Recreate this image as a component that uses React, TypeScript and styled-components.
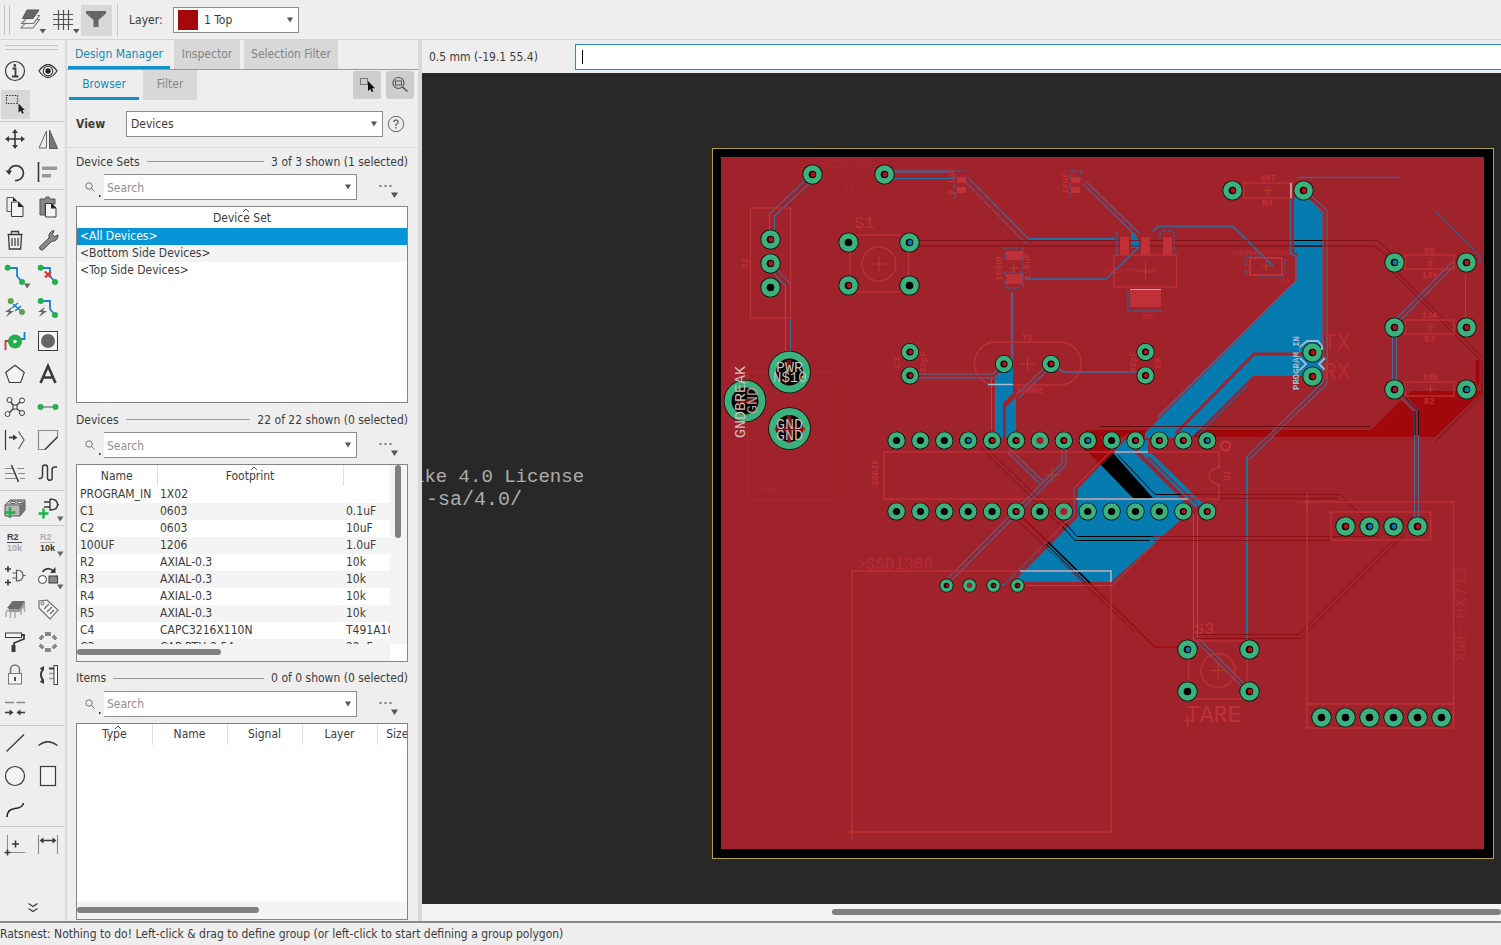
import React from 'react';
import styled, { createGlobalStyle, css } from 'styled-components';

const ink = '#3c3c3c';
const blue = '#0696d7';
const chrome = '#eeeeee';

const GlobalStyle = createGlobalStyle`
  *, *::before, *::after { box-sizing: border-box; }
  html, body, #root { height: 100%; }
  body {
    margin: 0;
    background: ${chrome};
    color: ${ink};
    font: 12px/16px "DejaVu Sans Condensed", "DejaVu Sans", sans-serif;
    overflow: hidden;
  }
  button, input, select { font: inherit; color: inherit; margin: 0; border-radius: 0; }
`;

/* ---------- shell ---------- */

const Shell = styled.div`
  display: flex;
  flex-direction: column;
  height: 100vh;
`;
const TopBar = styled.header`
  display: flex;
  align-items: center;
  height: 40px;
  flex: none;
  padding-top: 1px;
  padding-left: 4px;
  border-bottom: 1px solid #d4d4d4;
`;
const Grip = styled.div`
  width: 6px;
  height: 30px;
  margin-right: 7px;
  border: solid #c4c4c4;
  border-width: 0 1px;
`;
const BarButton = styled.button<{ $on?: boolean }>`
  width: 31px;
  height: 31px;
  margin-right: 1px;
  padding: 0;
  border: 0;
  background: ${p => (p.$on ? '#d8d8d8' : 'transparent')};
  svg { display: block; }
`;
const Rule = styled.div`
  width: 1px;
  height: 34px;
  margin: 0 11px 0 4px;
  background: #cccccc;
`;
const LayerLabel = styled.label`
  width: 44px;
`;
const Workspace = styled.div`
  display: flex;
  flex: 1;
  min-height: 0;
`;
const StatusBar = styled.footer`
  flex: none;
  height: 24px;
  border-top: 2px solid #8a8a8a;
  line-height: 23px;
  white-space: nowrap;
`;

/* ---------- form parts ---------- */

const Field = styled.div<{ $grow?: boolean; $w?: number; $open?: boolean }>`
  display: flex;
  align-items: center;
  height: 26px;
  ${p => (p.$grow ? 'flex: 1;' : `width: ${p.$w}px;`)}
  min-width: 0;
  padding-right: 4px;
  background: #fff;
  border: 1px solid #8c8c8c;
  ${p => p.$open && 'border-left: 0;'}
`;
const Swatch = styled.span`
  flex: none;
  width: 20px;
  height: 20px;
  margin-left: 4px;
  background: #a3080b;
`;
const control = css`
  flex: 1;
  min-width: 0;
  height: 24px;
  border: 0;
  background: transparent;
  appearance: none;
  outline: none;
`;
const Select = styled.select<{ $pad: number }>`
  ${control}
  padding: 0 0 0 ${p => p.$pad}px;
`;
const Input = styled.input`
  ${control}
  padding: 1px 3px 0;
  &::placeholder { color: #8f8f8f; opacity: 1; }
`;
const Arrow = () => (
  <svg width="8" height="6" viewBox="0 0 8 6"><path d="M1 .5h6L4 5.5z" fill="#555" /></svg>
);

/* ---------- tool palette ---------- */

const Palette = styled.nav`
  display: flex;
  flex-direction: column;
  flex: none;
  width: 67px;
  border-right: 2px solid #dadada;
`;
const PaletteGrip = styled.div`
  height: 5px;
  margin: 5px 7px 4px 5px;
  border: solid #c4c4c4;
  border-width: 1px 0;
`;
const ToolGroup = styled.div<{ $last?: boolean }>`
  display: grid;
  grid-template-columns: 33px 32px;
  grid-auto-rows: 33px;
  padding-top: 1px;
  border-bottom: ${p => (p.$last ? 0 : 1)}px solid #cbcbcb;
`;
const Tool = styled.button`
  padding: 0;
  border: 0;
  background: transparent;
  svg { display: block; overflow: visible; }
`;
const More = styled.button`
  align-self: center;
  margin-top: auto;
  margin-bottom: 7px;
  padding: 0;
  border: 0;
  background: none;
  svg { display: block; }
`;

const g = '#22b14c';
const b = '#1b7fd6';
const k = '#3a3a3a';
const m = '#8a8a8a';
const Drop = () => <path d="M24 24.500h6.500L27.200 29.500z" fill="#666" />;
const L = ({ d, c = k, w = 1.3, f = 'none' }: { d: string; c?: string; w?: number; f?: string }) => (
  <path d={d} stroke={c} strokeWidth={w} fill={f} />
);
const Dot = ({ x, y, r = 3, c = g }: { x: number; y: number; r?: number; c?: string }) => (
  <circle cx={x} cy={y} r={r} fill={c} />
);
const ValueGlyph = ({ top, bottom }: { top: string; bottom: string }) => (
  <g fontFamily="Liberation Sans" fontWeight="bold" fontSize="9">
    <text x="7" y="13" fill={top}>R2</text>
    <text x="7" y="24" fill={bottom}>10k</text>
    <L d="M7 15.500h15" c={top} w={1} />
  </g>
);

const groups: [string, React.ReactNode][][] = [
  [
    ['Info', <><circle cx="15" cy="16" r="9.500" fill="none" stroke={k} strokeWidth="1.200" /><L d="M12.500 13.500h3v8M12 21.500h6.500" w={1.800} /><Dot x={14.800} y={10.500} r={1.400} c={k} /></>],
    ['Show', <><L d="M6 16q9-13 18 0q-9 13-18 0z" /><circle cx="15" cy="16" r="4.800" fill="none" stroke={k} strokeWidth="1.100" /><Dot x={15} y={16} r={2.700} c="#222" /></>],
    ['Group', <><rect x="1" y="2" width="29" height="29" rx="1" fill="#d8d8d8" /><rect x="6.500" y="7.500" width="11" height="8" fill="none" stroke={k} strokeWidth="1.200" strokeDasharray="1.500 1.200" /><path d="M18.500 15.500v9l2.200-1.800 1.500 3 1.600-.8-1.500-3h2.500z" fill="#222" /></>],
  ],
  [
    ['Move', <><L d="M15 8v16M7 16h16" w={1.600} /><path d="M15 6l3 4h-6zM15 26l3-4h-6zM5 16l4-3v6zM25 16l-4-3v6z" fill={k} /></>],
    ['Mirror', <><L d="M13.500 8v17h-7.500z" w={1} c="#666" /><path d="M16.500 7v18.500h8z" fill="#777" stroke="#555" /></>],
    ['Rotate', <><L d="M8.500 17a7.500 7.500 0 1 1 6.500 7.500" w={1.700} /><path d="M5.500 14.500h6.500l-2.700 4.500z" fill={k} /></>],
    ['Align', <><L d="M5.500 6v20" w={1.600} /><rect x="9" y="10.500" width="15" height="3.500" fill="#999" /><rect x="9" y="18" width="9" height="3.500" fill="#999" /></>],
  ],
  [
    ['Copy', <><L d="M7 6.500h6l3 3M7 6.500v14h4" w={1} c="#555" /><L d="M11.500 11h7l4.500 4.500v10h-11.500z" w={1} f="#f4f4f4" /><path d="M18 10.500v5.500h5.500zM13 6v4h4z" fill="#222" /></>],
    ['Paste', <><path d="M7 8h5l1-2h3l1 2h5v5h-10v11H7z" fill="#888" stroke="#555" /><L d="M12.500 12.500h6l4.500 4.500v9h-10.500z" w={1} f="#f4f4f4" /><path d="M18 12v5.500h5.500z" fill="#222" /></>],
    ['Delete', <><L d="M7.500 10.500h15M11.500 10V7.500h7V10" /><L d="M8.500 11l.8 14h11.400l.8-14" /><L d="M12 14v8M15 14v8M18 14v8" w={1.600} c="#666" /></>],
    ['Change', <><path d="M6.500 23L16 14q-1-6 5-7.500l-1.500 4 2 2 3.500-1.500q0 6-6.500 6.500L9.500 26q-3 .5-3-3z" fill="#8a8a8a" stroke="#444" strokeWidth="1" /></>],
  ],
  [
    ['Route', <><L d="M8 9h9v8l5 6" c={b} w={1.800} /><Dot x={7.700} y={8.700} /><Dot x={22} y={23} /><Drop /></>],
    ['Ripup', <><L d="M8 9h9v8l5 6" c={b} w={1.800} /><Dot x={7.700} y={8.700} /><Dot x={22} y={23} /><L d="M12 12.500l6 6M18 12.500l-6 6" c="#e8312f" w={2.200} /></>],
    ['Unroute', <><path d="M12 15l-7 5h4l-3 5 8-6h-4z" fill="#666" /><L d="M13 12l7 6M12 16l6-5M15 19l6-5" c={b} w={1.600} /><Dot x={10.700} y={9} c="#5fa04e" /><Dot x={22} y={20} c="#5fa04e" /></>],
    ['Quick route', <><path d="M12 15l-7 5h4l-3 5 8-6h-4z" fill="#666" /><L d="M8 9h9v8l5 6" c={b} w={1.800} /><Dot x={7.700} y={9} /><Dot x={22} y={23} /></>],
    ['Via', <><L d="M24.500 7v7h-4" c={b} w={1.800} /><L d="M5.500 25v-9h4" c="#c33" w={1.800} /><Dot x={15} y={16.500} r={7} /><Dot x={15} y={16.500} r={1.800} c="#fff" /></>],
    ['Hole', <><rect x="5.500" y="6.500" width="19" height="19" fill="#f4f4f4" stroke={k} /><Dot x={15} y={16} r={7} c="#666" /></>],
    ['Polygon', <L d="M15 7.200l9.300 7.300-3.700 10H9.400L5.700 14.500z" w={1.100} f="#f4f4f4" />],
    ['Text', <L d="M7.500 25L15 8l7.500 17M10.500 19.500h9" w={2.600} />],
    ['Fanout', <><L d="M13 14l-3-4M17 14l4-4M13 18l-4 4M17 18l4 3" /><rect x="13" y="14" width="4" height="4" fill="none" stroke={k} /><g fill="#f4f4f4" stroke={k}><circle cx="9.500" cy="9" r="2.500" /><circle cx="22" cy="9.500" r="2.500" /><circle cx="7.500" cy="23" r="2.500" /><circle cx="22" cy="22" r="2.500" /></g></>],
    ['Signal', <><L d="M8 16h14" c={m} w={1.600} /><Dot x={7.500} y={16} /><Dot x={22.500} y={16} /></>],
    ['Split', <><L d="M5.500 6v20" w={1.200} /><L d="M9 13.500h5" w={1.800} /><path d="M13 10.500l4.500 3-4.500 3z" fill={k} /><L d="M18.500 7.500l5.500 8.500-5.500 9" w={1.300} c="#666" /></>],
    ['Miter', <><L d="M24.500 13V6.500h-19v19H12" c={m} w={1.200} /><L d="M12 25.500l12.500-12.500" w={1.600} /></>],
    ['Slice', <><L d="M5 11.500h7M17 11.500h7M5 16.500h9M18 16.500h7M5 21.500h11M20 21.500h5" c={m} w={1.100} /><L d="M11.500 8l7 17" w={1.500} /></>],
    ['Meander', <L d="M5.500 21.500H7q2.500 0 2.500-3v-4a2 2 0 0 1 0 0v-4a2.500 2.500 0 0 1 5 0v10.500a2.300 2.300 0 0 0 4.600 0v-8q0-3 2.500-3h2.500" w={1.500} />],
  ],
  [
    ['Add part', <><path d="M5 13l5-5h15v10l-5 6H5z" fill="#b8b8b8" stroke="#555" /><path d="M20 13l5-5v10l-5 6z" fill="#777" /><L d="M5 13h15v11" w={.8} c="#555" /><ellipse cx="13" cy="10.500" rx="2.500" ry="1.200" fill="#eee" stroke="#555" /><ellipse cx="19.500" cy="10.500" rx="2.500" ry="1.200" fill="#eee" stroke="#555" /><L d="M10 15v11M4.500 20.500h11" c={g} w={2.600} /></>],
    ['Add gate', <><L d="M11 10h6M11 15h6M17 7v11q7.500 0 7.500-5.500T17 7M24 12.500h2" w={1.400} /><L d="M10.500 16.500v10M5.500 21.500h10" c={g} w={2.600} /><Drop /></>],
  ],
  [
    ['Name', <ValueGlyph top="#444" bottom="#aaa" />],
    ['Value', <><ValueGlyph top="#b0b0b0" bottom="#333" /><Drop /></>],
    ['Gate swap', <><L d="M8 6v6M5 9h6M8 19.500v6M5 22.500h6" w={1.600} /><L d="M12.500 13h4M12.500 18h4M16.500 10v11q6.500 0 6.500-5.500T16.500 10M23 15.500h2.500" w={1.200} c="#555" /></>],
    ['Replace', <><circle cx="9.500" cy="19.500" r="4" fill="#fff" stroke={k} /><rect x="16" y="16" width="8.500" height="7" fill="#8a8a8a" stroke={k} /><L d="M9.500 12q5-6 11-1" w={1.700} /><path d="M22.500 7v6h-5.500z" fill={k} /><Drop /></>],
    ['Package', <><path d="M7 15l5.500-7H25l-5 8H9z" fill="#6c6c6c" /><path d="M9 16h11l5-8v5l-5 6H8z" fill="#9a9a9a" /><L d="M8 17l-2 2v5M12.500 18l-2 2v5M17 18l-2 2v5M21 17v5M24.500 13v6" c="#aaa" w={1.500} /></>],
    ['Attribute', <><L d="M6 8l8-1 11 10-8 9L6 15z" c="#666" w={1.100} f="#f4f4f4" /><circle cx="9.500" cy="10.500" r="1.500" fill="none" stroke="#666" /><L d="M11 16l5-5M14 19l5-5M17 21l4-4" c="#666" w={1.100} /></>],
    ['Paint', <><rect x="5.500" y="7" width="16" height="4.500" fill="#f4f4f4" stroke={k} /><L d="M22 9h2v4l-10 4v3" w={1.800} /><path d="M11.500 19h4v7h-4z" fill={k} /></>],
    ['Array', <g fill="#888" stroke="#666" strokeWidth=".6"><rect x="12.500" y="6.500" width="5" height="3" /><rect x="12.500" y="22.500" width="5" height="3" /><path d="M6 12l3-3 2 2-3 3zM24 12l-3-3-2 2 3 3zM6 20l3 3 2-2-3-3zM24 20l-3 3-2-2 3-3z" /></g>],
    ['Lock', <><L d="M10.500 15v-4.500a4.500 4.500 0 0 1 9 0V15" c="#777" w={1.600} /><rect x="8.500" y="14.500" width="13" height="10.500" fill="#f4f4f4" stroke="#777" /><L d="M15 18v4" w={1.800} /></>],
    ['Pin swap', <><L d="M10 10q-4 5.500 0 11.500" w={2} /><path d="M6.500 9.500L11 7v5zM6.500 22.500L11 25v-5z" fill={k} /><L d="M16 9.500h5" w={2} /><L d="M16 14.500h5M16 19.500h5" w={1.600} c="#999" /><rect x="21" y="6.500" width="3.500" height="19" fill="#fff" stroke={k} /></>],
    ['Optimize', <><L d="M5 10.500h9M16.500 10.500H25" c={m} w={1.600} /><L d="M5 20.500h5M20 20.500h5" w={1.700} /><path d="M9.500 17.500l4 3-4 3zM20.500 17.500l-4 3 4 3z" fill={k} /></>],
  ],
  [
    ['Line', <L d="M6.500 24.500L24 7.500" />],
    ['Arc', <L d="M5.500 18.500q9-7.500 19 0" />],
    ['Circle', <circle cx="15" cy="16" r="9.500" fill="#f4f4f4" stroke={k} strokeWidth="1.200" />],
    ['Rectangle', <rect x="7.500" y="6.500" width="15" height="19" fill="#f4f4f4" stroke={k} strokeWidth="1.200" />],
    ['Spline', <L d="M7 24q0-7.500 8-8.500T23.500 10" w={1.600} c="#222" />],
  ],
  [
    ['Mark', <><L d="M7.500 7v16M7.500 24.500H25" c={m} w={1} /><L d="M15.500 12.500v7M12 16h7" w={1.600} /><L d="M7.500 21.500v6M4.500 24.500h6" w={1.600} /></>],
    ['Dimension', <><L d="M5.500 7v19M24.500 7v19" c={m} w={1.100} /><L d="M8 12.500h14" w={1.500} /><path d="M6.500 12.500l4-3v6zM23.500 12.500l-4-3v6z" fill={k} /></>],
  ],
];

/* ---------- design manager ---------- */

const Dock = styled.aside`
  display: flex;
  flex-direction: column;
  flex: none;
  width: 355px;
  border-right: 4px solid #d8d8d8;
`;
const Tabs = styled.div`
  display: flex;
  gap: 4px;
  height: 30px;
  padding-left: 1px;
  border-bottom: 1px solid #9a9a9a;
`;
const SubTabs = styled.div`
  display: flex;
  gap: 4px;
  height: 30px;
  padding: 0 4px 0 2px;
`;
const Tab = styled.button<{ $on?: boolean; $w: number }>`
  width: ${p => p.$w}px;
  padding: 0 0 2px;
  border: 0;
  white-space: nowrap;
  background: ${p => (p.$on ? 'transparent' : '#d8d8d8')};
  color: ${p => (p.$on ? '#1587bd' : '#858585')};
  box-shadow: ${p => (p.$on ? 'inset 0 -3px #1290cb' : 'none')};
`;
const SquareButton = styled.button`
  width: 28px;
  height: 28px;
  margin: 1px 0 0 1px;
  padding: 0;
  border: 0;
  border-radius: 2px;
  background: #cdcdcd;
  svg { display: block; }
`;
const Push = styled.div`
  flex: 1;
`;
const ViewRow = styled.div`
  display: flex;
  align-items: center;
  height: 48px;
  padding: 0 13px 0 9px;
  border-bottom: 1px solid #dadada;
`;
const ViewLabel = styled.label`
  width: 50px;
  font-weight: bold;
`;
const Help = styled.button`
  margin-left: 4px;
  padding: 0;
  border: 0;
  background: none;
  svg { display: block; }
`;
const Sections = styled.div`
  display: flex;
  flex-direction: column;
  flex: 1;
  gap: 7px;
  min-height: 0;
  padding: 4px 10px 1px 9px;
`;
const Section = styled.section`
  display: flex;
  flex-direction: column;
  flex: 1;
  min-height: 0;
`;
const Caption = styled.div`
  display: flex;
  align-items: center;
  gap: 7px;
  height: 18px;
  margin-bottom: 4px;
  padding-top: 1px;
  white-space: nowrap;
  &::before { content: ""; order: 1; flex: 1; height: 1px; background: #9a9a9a; }
`;
const Count = styled.span`
  order: 2;
`;
const SearchRow = styled.div`
  display: flex;
  align-items: center;
  margin-bottom: 6px;
`;
const SearchIcon = styled.label`
  width: 28px;
  height: 26px;
  svg { display: block; }
`;
const Dots = styled.button`
  width: 51px;
  height: 26px;
  padding: 0;
  border: 0;
  background: none;
  svg { display: block; }
`;
const ListBox = styled.div`
  display: flex;
  flex-direction: column;
  flex: 1;
  min-height: 0;
  overflow: hidden;
  background: #fff;
  border: 1px solid #858585;
`;
const ListMain = styled.div`
  display: flex;
  flex: 1;
  min-height: 0;
`;
const Viewport = styled.div`
  flex: 1;
  min-width: 0;
  overflow: hidden;
`;
const Table = styled.table<{ $w: string }>`
  width: ${p => p.$w};
  table-layout: fixed;
  border-collapse: collapse;
  th {
    position: relative;
    height: 21px;
    padding: 0;
    font-weight: normal;
    border-right: 1px solid #e0e0e0;
  }
  th:last-child { border-right: 0; }
  td {
    height: 17px;
    padding: 0 0 0 3px;
    line-height: 17px;
    white-space: nowrap;
    overflow: hidden;
  }
  tbody tr:nth-child(even) { background: #f4f4f4; }
`;
const SelectedRow = styled.tr`
  background: ${blue};
  color: #fff;
`;
const SortMark = styled.svg`
  position: absolute;
  top: 1px;
  left: 50%;
`;
const Track = styled.div<{ $v?: boolean; $corner?: boolean }>`
  flex: none;
  ${p => (p.$v ? 'width: 17px; padding: 0 6px 0 5px;' : `height: 17px; padding: 5px 0 6px;`)}
  ${p => p.$corner && 'margin-right: 17px;'}
  background: repeating-conic-gradient(#ececec 0% 25%, #fbfbfb 0% 50%) 0 0 / 2px 2px;
`;
const Thumb = styled.div<{ $size: string; $v?: boolean; $end?: boolean }>`
  ${p => (p.$v ? `height: ${p.$size}; width: 6px;` : `width: ${p.$size}; height: 6px;`)}
  ${p => p.$end && 'margin-left: auto;'}
  border-radius: 3px;
  background: #808080;
`;

function Search({ id, label }: { id: string; label: string }) {
  return (
    <SearchRow>
      <SearchIcon htmlFor={id} aria-label={label}>
        <svg width="28" height="26"><circle cx="13" cy="12" r="3.200" fill="none" stroke="#777" /><path d="M15.500 14.500l3 3" stroke="#777" /><rect x="23" y="21" width="1.500" height="2" fill="#333" /></svg>
      </SearchIcon>
      <Field $grow $open>
        <Input id={id} placeholder="Search" />
        <Arrow />
      </Field>
      <Dots aria-label={`${label} options`}>
        <svg width="51" height="26"><path d="M22.500 12h2m3 0h2m3 0h2" stroke="#555" strokeWidth="1.600" /><path d="M34 18.500h7L37.500 24z" fill="#555" /></svg>
      </Dots>
    </SearchRow>
  );
}
const Sort = () => (
  <SortMark width="8" height="5" viewBox="0 0 8 5"><path d="M1 4l3-3 3 3" fill="none" stroke="#555" /></SortMark>
);

const devices = [
  ['PROGRAM_IN', '1X02', ''],
  ['C1', '0603', '0.1uF'],
  ['C2', '0603', '10uF'],
  ['100UF', '1206', '1.0uF'],
  ['R2', 'AXIAL-0.3', '10k'],
  ['R3', 'AXIAL-0.3', '10k'],
  ['R4', 'AXIAL-0.3', '10k'],
  ['R5', 'AXIAL-0.3', '10k'],
  ['C4', 'CAPC3216X110N', 'T491A106M004AT'],
  ['C3', 'CAP-PTH-2.54', '22pF'],
];

/* ---------- board view ---------- */

const Editor = styled.main`
  display: flex;
  flex-direction: column;
  flex: 1;
  min-width: 0;
`;
const CommandRow = styled.div`
  display: flex;
  align-items: center;
  flex: none;
  height: 33px;
  padding-left: 7px;
`;
const Coordinates = styled.span`
  width: 146px;
`;
const CommandField = styled.div`
  display: flex;
  align-items: center;
  flex: 1;
  height: 26px;
  padding-left: 6px;
  background: #fff;
  border: 1px solid #2b8fba;
  border-right: 0;
  box-shadow: 0 0 0 1px #d6f1f9;
`;
const Caret = styled.span`
  width: 1px;
  height: 14px;
  background: #000;
`;
const BoardArea = styled.div`
  flex: 1;
  min-height: 0;
  background: #282828;
  svg { display: block; width: 100%; height: 100%; }
`;

const copper = '#a0222b';
const silk = '#bf3037';
const faint = '#ab2831';
const pour = '#057bb0';
const top = '#a1080c';
const pale = '#9fbdd0';

/* A routed wire: two isolation outlines with copper between them. */
const Wire = ({ p, c = '#41709f', w = 6 }: { p: string; c?: string; w?: number }) => (
  <>
    <polyline points={p} fill="none" stroke={c} strokeWidth={w} />
    <polyline points={p} fill="none" stroke={copper} strokeWidth={w - 2} />
  </>
);
const Seg = ({ p, c = '#2170a6', w = 1, dash }: { p: string; c?: string; w?: number; dash?: string }) => (
  <polyline points={p} fill="none" stroke={c} strokeWidth={w} strokeDasharray={dash} />
);
const Box = ({ x, y, x2, y2, c = silk, w = 1.4, rx = 0 }: { x: number; y: number; x2: number; y2: number; c?: string; w?: number; rx?: number }) => (
  <rect x={x} y={y} width={x2 - x} height={y2 - y} rx={rx} fill="none" stroke={c} strokeWidth={w} />
);
const Cross = ({ x, y, s = 8 }: { x: number; y: number; s?: number }) => (
  <path d={`M${x - s} ${y}h${2 * s}M${x} ${y - s}v${2 * s}`} stroke="#b5452c" strokeWidth=".8" />
);
const T = ({ x, y, s, c = silk, a = 0, bold, children }: { x: number; y: number; s: number; c?: string; a?: number; bold?: boolean; children: string }) => (
  <text transform={`translate(${x} ${y}) rotate(${a})`} fontSize={s} fill={c} fontWeight={bold ? 'bold' : 'normal'}>{children}</text>
);

type Pad = [number, number, string?];
const red = '#b0141b';
const stdPads: Pad[] = [
  [812.5, 174.5, red], [884.5, 174.5, red], [770.5, 239.500, red], [770.5, 263.500, red], [770.5, 287.500],
  [848.5, 242.500], [909.5, 242.500, pour], [848.5, 285.500, red], [909.5, 285.500],
  [1232.500, 190.500, red], [1303.5, 190.500, red],
  [1394.5, 262.500, pour], [1466.5, 262.500, red], [1394.5, 327.500, red], [1466.5, 327.500, red], [1394.5, 389.500, red], [1466.5, 389.500, pour],
  [1312.5, 352.500, red], [1312.5, 376.500, red],
  [1345.500, 526.500, red], [1369.500, 526.500, pour], [1393.500, 526.500, pour], [1417.500, 526.500, red],
  [1187.500, 649.500, pour], [1249.500, 649.500, red], [1187.500, 691.500], [1249.500, 691.500, red],
  ...[0, 1, 2, 3, 4, 5].map(i => [1321.500 + 24 * i, 717.500] as Pad),
];
const topHoles: (string | undefined)[] = [undefined, undefined, undefined, pour, red, red, copper, red, pour, undefined, red, red, red, pour];
const bottomHoles: (string | undefined)[] = [undefined, undefined, undefined, undefined, undefined, red, undefined, copper, undefined, undefined, undefined, undefined, red, red];
const dipPads: Pad[] = [
  [910, 352, red], [910, 375.500, red], [1004, 364, red], [1051, 364, red], [1145.500, 352, red], [1145.500, 375.500, red],
  ...topHoles.map((h, i) => [896.500 + 23.900 * i, 440.500, h] as Pad),
  ...bottomHoles.map((h, i) => [896.500 + 23.900 * i, 511.500, h] as Pad),
];
const displayPads: Pad[] = [[946.500, 585.500, red], [969.500, 585.500, copper], [993.500, 585.500, red], [1017.500, 585.500, red]];
const bigPads: Pad[] = [[789.500, 372], [745, 401], [789.500, 428.500]];

const Pads = ({ list, r, hole }: { list: Pad[]; r: number; hole: number }) => (
  <>
    {list.map(([x, y, c], i) => (
      <g key={i}>
        <circle cx={x} cy={y} r={r + 0.800} fill="#06110c" />
        <circle cx={x} cy={y} r={r} fill="#3bb27d" />
        <circle cx={x} cy={y} r={hole} fill={c === copper ? copper : '#000'} />
        {c && <circle cx={x + 0.500} cy={y} r={hole - 1.300} fill={c} />}
      </g>
    ))}
  </>
);

const Board = () => (
  <svg role="img" aria-label="Board layout">
    <g transform="translate(-422 -73)" fontFamily="Liberation Mono">
      <T x={413} y={482} s={19} c="#adadad">ike 4.0 License</T>
      <T x={426} y={505} s={20} c="#adadad">-sa/4.0/</T>
      <rect x="712.500" y="148.500" width="781" height="710" fill="#000" stroke="#b3a04e" />
      <rect x="721" y="157" width="763" height="692" fill={copper} />

      {/* top layer pour */}
      <path d="M1085 430H1371L1411 391H1483L1435 437H1085z" fill={top} />
      <Seg p="1477.500,360 1477.500,385" c={top} w={4} />

      {/* bottom layer pours */}
      <path d="M1294 197h12l16 16v163h-69l-62 62h-46v-5l152-152v-28h-3z" fill={pour} />
      <path d="M1125 440h23v18l50 48-13 10-74 66h-90l-4-4 61-61v-28z" fill={pour} />
      <path d="M996 376l9-9h8v26l-10 11v34h-7zM1016 397l-10 10v31h10z" fill={pour} />
      <path d="M1084 449l14-14 16 17-13 13z" fill={top} />
      <path d="M1101 465l12-12 40 45h-20z" fill="#000" />
      <path d="M1131 231l8 9v8h-8z" fill={pour} />

      {/* bottom layer wires */}
      <Wire p="808,181 772,215 772,232" />
      <Wire p="775,271 788,285 788,352" />
      <Seg p="893,171.500 954,171.500" c="#5b5a84" w={2.500} />
      <Seg p="893,178.500 954,178.500" />
      <Wire p="966,179 1028,242" />
      <Seg p="1028,239 1115,239" w={2} />
      <Seg p="1012,292 1012,366" c="#5b5a84" w={2.500} />
      <Seg p="1025,279 1106,279 1140,246" w={1.600} />
      <Wire p="1085,183 1138,235" w={5} />
      <Wire p="918,376 993.500,376 1002,368" w={5} />
      <Wire p="993.500,379 993.500,433" w={5} />
      <Seg p="1056,368 1064,372 1137,372" c="#5b5a84" w={2} />
      <Wire p="1046,369 1018,396" w={5} />
      <Wire p="1008,450 1041,482" w={5} />
      <Wire p="1064,448 1064,464 950,579" w={5} />
      <Seg p="1004.500,438 1004.500,404 1016,393" c={copper} w={3} />
      <Seg p="1153,231 1158,226.500 1233,226.500 1273,266" c="#3d6391" w={2} />
      <Seg p="1297,177.500 1400,177.500" c="#55588a" w={1.500} />
      <Seg p="1290.500,183 1290.500,253 1296,257 1296,281 1157,418" c="#4a6796" w={1.500} />
      <Wire p="1309,197 1325,211 1325,383 1248,458" w={5} />
      <Seg p="1247,457 1247,643" w={2} />
      <Seg p="1310,354 1254,354 1176,433" c={copper} w={3} />
      <Seg p="1247,386 1198,435" c="#3d6391" />
      <Wire p="1453,264 1397,321" w={5} />
      <Wire p="1394.500,336 1394.500,381" w={5} />
      <Seg p="1465.500,275 1465.500,317" />
      <Seg p="1435,211 1480,256 1480,264" dash="3 1" />
      <Wire p="1403,397 1416.500,411 1416.500,519" w={5} />
      <Seg p="1403,395 1418.500,411 1418.500,435" c="#141018" />
      <Seg p="1415,411 1415,435" c="#141018" />
      <Seg p="1148,453 1207,510" c={pour} w={4} />
      <Seg p="1135,450 1196,511" c={copper} w={4} />
      <Wire p="1195.500,514 1195.500,638 1246,688" w={5} />
      <Seg p="1026,585.500 1112,585.500 1153,545" c="#4a6796" />
      <Seg p="1000,585 1004,585 1066,522 1074,516 1074,488 1128,434" c="#4a6796" />

      {/* top layer wires */}
      <g opacity=".9">
        <Seg p="918,240.500 1378,240.500 1396,258" c="#7d1119" />
        <Seg p="918,246 1375,246 1390,259" c="#7d1119" />
        <Seg p="1392,272 1482,362 1482,395 1435,442" c="#7d1119" />
        <Seg p="1397,272 1482,357" c="#7d1119" />
        <Seg p="1100,426.500 1370,426.500" c="#5f0d13" />
        <Seg p="980,447 1060,525" c="#7d1119" />
        <Seg p="986,447 1066,525" c="#7d1119" />
        <Seg p="1014,517 1135,632" c="#7d1119" />
        <Seg p="1019,514 1155,647 1180,647" c={top} w={1.500} />
        <Seg p="1153,536.500 1378,536.500" c="#8a0d14" />
        <Seg p="1153,540.500 1331,540.500" c="#8a0d14" />
        <Seg p="1181,494.500 1340,494.500 1368,521" c="#8a0d14" />
        <Seg p="1181,498.500 1338,498.500" c="#8a0d14" />
        <Seg p="1198,634.500 1299,634.500 1400,533" c="#8a0d14" />
        <Seg p="1198,638.500 1301,638.500 1404,535" c="#8a0d14" />
      </g>
      <Seg p="1066,524 1077,536.500 1153,536.500" c="#000" />
      <Seg p="1062,526 1075,540.500 1150,540.500" c="#000" />
      <Seg p="1118,455 1155,494.500 1181,494.500" c="#000" />
      <Seg p="1294,240.500 1322,240.500" c="#000" />
      <Seg p="1294,246 1322,246" c="#000" />
      <Seg p="1048,542 1090,583" c="#000" w={1.500} />
      <Seg p="1046,544 1086,583" c="#000" />

      {/* part outlines */}
      <Box x={750.500} y={208} x2={790.500} y2={318} />
      <Box x={747.500} y={372} x2={832} y2={500} c={faint} w={1} />
      <Seg p="747,472 832,472" c={faint} />
      <Box x={823} y={167} x2={867} y2={181} c={faint} w={1} />
      <Box x={850} y={235} x2={908.500} y2={292} />
      <circle cx="879" cy="264" r="17" fill="none" stroke={silk} strokeWidth="1.400" />
      <Box x={974.500} y={342} x2={1081} y2={385} rx={21} />
      <path d="M1219 452H884v47h335v-14q-10-2-10-9t10-9z" fill="none" stroke={silk} strokeWidth="1.500" />
      <circle cx="1225.500" cy="446" r="4.500" fill="none" stroke={silk} strokeWidth="2.500" />
      <Box x={1244} y={183} x2={1291} y2={198} />
      <Box x={1405} y={255} x2={1454} y2={269} />
      <Box x={1405} y={320} x2={1454} y2={334} />
      <Box x={1405} y={382} x2={1454} y2={396} />
      <Box x={852} y={571} x2={1111} y2={832} />
      <Box x={1307} y={502} x2={1453.500} y2={728} />
      <Seg p="1307,704 1453,704" c={silk} w={1.400} />
      <Box x={1331} y={512} x2={1430.500} y2={540} />
      <Box x={1188.500} y={641} x2={1247} y2={699} />
      <circle cx="1218" cy="670.500" r="17" fill="none" stroke={silk} strokeWidth="1.400" />
      <Box x={1114} y={255} x2={1176.500} y2={287} />
      <path d="M1120 237h9v18h-9zM1141 237h9v18h-9zM1163 237h9v18h-9zM1130 290h31v17h-31zM1006 251h17v9h-17zM1006 274h17v10h-17zM957 177h9v6h-9zM957 187h9v6h-9zM1071 177h9v6h-9zM1071 187h9v6h-9z" fill={silk} />
      <Box x={1250} y={258} x2={1282} y2={275} w={2} />
      <Seg p="1160,237 1160,231 1174,231 1174,255" dash="5 2" />
      <Seg p="1117,255 1117,231" />
      <Seg p="1128,291 1128,311 1162,311" />
      <Seg p="1130,289.500 1161,289.500" c="#d4b0b8" />
      <Seg p="1005,259 1005,248 1023,248 1023,288 1005,288 1005,272 1023,272" dash="6 3" />
      <Seg p="955,198 955,171 966,171" dash="6 3" />
      <Seg p="1070,198 1070,171 1081,171 1081,180" dash="6 3" />
      <Seg p="1246,275 1246,257 1260,257" dash="6 3" />
      <Seg p="1260,276 1285,276 1285,257" dash="6 3" />
      <Seg p="988,384.500 1013,384.500" c={pale} w={1.500} />
      <Seg p="1115,452 1148,452" c={pale} w={1.500} />
      <Seg p="1076,499 1188,499" c={pale} w={1.500} />
      <Seg p="1020,571 1111,571 1111,582" c={pale} w={1.500} />
      <Seg p="1291,183 1291,198" c="#d4b0b8" w={1.500} />
      <Cross x={879} y={264} />
      <Cross x={1218} y={670.500} />
      <Cross x={1027.500} y={364} />
      <Cross x={1052} y={475} />
      <Cross x={1268} y={190.500} s={4} />
      <Cross x={1430.500} y={262} s={4} />
      <Cross x={1430.500} y={327} s={4} />
      <Cross x={1430.500} y={389} s={4} />
      <Cross x={1145.500} y={271} s={9} />
      <Cross x={1266} y={266} s={5} />
      <Cross x={1014} y={268} s={5} />
      <Cross x={1307} y={502} s={9} />
      <Cross x={852} y={832} s={7} />
      <Cross x={1187.500} y={721} s={5} />

      <Pads list={stdPads} r={9.300} hole={3.800} />
      <Pads list={dipPads} r={8.300} hole={3.600} />
      <Pads list={displayPads} r={6.300} hole={2.800} />
      <Pads list={bigPads} r={20.500} hole={13.500} />
      <path d="M789 360v12M775 429h30M789 415v28M737 401h18" stroke={red} strokeWidth="4" opacity=".7" />
      <Seg p="1300,347 1307,341 1318,341 1322,346 1322,350" c={pale} w={1.800} />
      <Seg p="1300,358 1306,364 1300,370" c={pale} w={1.800} />
      <Seg p="1325,358 1319,364 1325,370" c={pale} w={1.800} />

      {/* names and values */}
      <T x={854} y={228} s={17}>S1</T>
      <T x={1194} y={634} s={17}>S3</T>
      <T x={1186} y={722} s={23}>TARE</T>
      <T x={1323} y={350} s={23} c="#b52c34">TX</T>
      <T x={1323} y={379} s={23} c="#b52c34">RX</T>
      <T x={856} y={569} s={16} c="#b52c34">&gt;SSD1306</T>
      <T x={1466} y={662} s={18} a={-90} c="#b12a33">XWF-HX711</T>
      <T x={776} y={372} s={15} c="#c5c0bf">PWR</T>
      <T x={773} y={382} s={14} c="#c5c0bf">N$10</T>
      <T x={776} y={429} s={15} c="#cdb3b3">GND</T>
      <T x={776} y={440} s={15} c="#cdb3b3">GND</T>
      <T x={757} y={414} s={15} a={-90} c="#b59a9a">GND</T>
      <T x={745} y={438} s={15} a={-90} c="#d8bfbf">GNDBREAK</T>
      <T x={1299} y={390} s={9} a={-90} c={pale} bold>PROGRAM_IN</T>
      <T x={1276} y={175} s={9} a={180} bold>10k</T>
      <T x={1262} y={206} s={9} bold>R4</T>
      <T x={1424} y={254} s={9} bold>R5</T>
      <T x={1422} y={278} s={9} bold>10k</T>
      <T x={1422} y={318} s={9} bold>10k</T>
      <T x={1424} y={342} s={9} bold>R3</T>
      <T x={1422} y={380} s={9} bold>10k</T>
      <T x={1424} y={404} s={9} bold>R2</T>
      <T x={954} y={195} s={9} a={-90} bold>0.1uF</T>
      <T x={1068} y={194} s={9} a={-90} bold>10uF</T>
      <T x={1002} y={281} s={9} a={-90} bold>100UF</T>
      <T x={1030} y={280} s={9} a={-90} bold>1.0uF</T>
      <T x={1290} y={250} s={7} a={180}>T491A106M004AT</T>
      <T x={1280} y={283} s={8}>C4</T>
      <T x={1158} y={269} s={6} a={180}>V_REG_LD1117V33</T>
      <T x={1155} y={314} s={7} a={180}>U$2</T>
      <T x={1022} y={340} s={9} bold>Y2</T>
      <T x={1016} y={393} s={9} bold>16MHz</T>
      <T x={900} y={368} s={9} a={-90} bold>C3</T>
      <T x={926} y={373} s={9} a={-90} bold>22pF</T>
      <T x={1136} y={373} s={9} a={-90} bold>22pF</T>
      <T x={1161} y={368} s={9} a={-90} bold>C5</T>
      <T x={748} y={269} s={9} a={-90} bold>S2</T>
      <T x={878} y={486} s={9} a={-90} bold>28DIP</T>
      <T x={1230} y={481} s={9} a={-90} bold>U1</T>
      <T x={818} y={164} s={10} c={faint}>CAPACITOR</T>
      <T x={843} y={191} s={9} c={faint}>R9</T>
      <T x={794} y={482} s={8} c={faint}>J2</T>
      <T x={758} y={493} s={8} c={faint}>POWER_JACK</T>
    </g>
  </svg>
);

export default function App() {
  return (
    <>
      <GlobalStyle />
      <Shell>
        <TopBar>
          <Grip />
          <BarButton aria-label="Layer settings">
            <svg width="31" height="31" fill="none" stroke="#777"><path d="M9 17.500L4 23h12l6.500-8.500h-3M9.500 13.500L4.500 18.500h12l6-8h-2" strokeWidth="1.100" /><path d="M5.500 13.500L10 5h12l-6 8.500z" fill="#666" stroke="#555" /><path d="M22.500 24h6.500L25.800 28.500z" fill="#555" stroke="none" /></svg>
          </BarButton>
          <BarButton aria-label="Grid">
            <svg width="31" height="31"><path d="M9.500 5v20M14.500 5v20M19.500 5v20M4 9.500h20M4 14.500h20M4 19.500h20" stroke="#555" strokeWidth="1.200" /><path d="M24 24h6.500L27.300 28.500z" fill="#555" /></svg>
          </BarButton>
          <BarButton $on aria-label="Selection filter">
            <svg width="31" height="31"><path d="M5 6h20v2.500L17.500 15v7h-5v-7L5 8.500z" fill="#666" /></svg>
          </BarButton>
          <Rule />
          <LayerLabel htmlFor="layer">Layer:</LayerLabel>
          <Field $w={126}>
            <Swatch />
            <Select id="layer" $pad={6}><option>1 Top</option></Select>
            <Arrow />
          </Field>
        </TopBar>

        <Workspace>
          <Palette aria-label="Tools">
            <PaletteGrip />
            {groups.map((tools, i) => (
              <ToolGroup key={i} $last={i === groups.length - 1}>
                {tools.map(([name, art]) => (
                  <Tool key={name} aria-label={name}><svg width="33" height="33" viewBox="0 0 33 33">{art}</svg></Tool>
                ))}
              </ToolGroup>
            ))}
            <More aria-label="More tools">
              <svg width="12" height="12" fill="none" stroke={k} strokeWidth="1.200"><path d="M1.500 1.500L6 4.500l4.500-3M1.500 6.500L6 9.500l4.500-3" /></svg>
            </More>
          </Palette>

          <Dock>
            <Tabs>
              <Tab $on $w={102}>Design Manager</Tab>
              <Tab $w={66}>Inspector</Tab>
              <Tab $w={94}>Selection Filter</Tab>
            </Tabs>
            <SubTabs>
              <Tab $on $w={70}>Browser</Tab>
              <Tab $w={54}>Filter</Tab>
              <Push />
              <SquareButton aria-label="Select in board">
                <svg width="28" height="28"><rect x="7.500" y="7.500" width="7" height="6" fill="none" stroke="#777" /><path d="M15 10v10l2.300-1.900 1.500 3 1.600-.8-1.500-3H22z" fill="#111" /></svg>
              </SquareButton>
              <SquareButton aria-label="Zoom to selection">
                <svg width="28" height="28" fill="none" stroke="#555"><circle cx="12.500" cy="12" r="5.500" strokeWidth="1.200" /><rect x="9.500" y="10" width="6" height="4" /><path d="M16.500 16l5 4.500" strokeWidth="1.600" /></svg>
              </SquareButton>
            </SubTabs>
            <ViewRow>
              <ViewLabel htmlFor="view">View</ViewLabel>
              <Field $grow>
                <Select id="view" $pad={4}><option>Devices</option></Select>
                <Arrow />
              </Field>
              <Help aria-label="Help">
                <svg width="18" height="18" fill="none" stroke="#666"><circle cx="9" cy="9" r="7.700" /><path d="M6.700 7.200Q7 5 9 5t2.300 2Q11.300 8.300 9 9.500v1.500M9 12v1.500" strokeWidth="1.400" /></svg>
              </Help>
            </ViewRow>

            <Sections>
              <Section>
                <Caption>Device Sets<Count>3 of 3 shown (1 selected)</Count></Caption>
                <Search id="find-sets" label="Search device sets" />
                <ListBox>
                  <Table $w="100%">
                    <thead><tr><th>Device Set<Sort /></th></tr></thead>
                    <tbody>
                      <SelectedRow><td>&lt;All Devices&gt;</td></SelectedRow>
                      <tr><td>&lt;Bottom Side Devices&gt;</td></tr>
                      <tr><td>&lt;Top Side Devices&gt;</td></tr>
                    </tbody>
                  </Table>
                </ListBox>
              </Section>

              <Section>
                <Caption>Devices<Count>22 of 22 shown (0 selected)</Count></Caption>
                <Search id="find-devices" label="Search devices" />
                <ListBox>
                  <ListMain>
                    <Viewport>
                      <Table $w="440px">
                        <colgroup><col width="80" /><col width="186" /><col /></colgroup>
                        <thead><tr><th>Name</th><th>Footprint<Sort /></th><th aria-label="Value" /></tr></thead>
                        <tbody>
                          {devices.map(row => <tr key={row[0]}>{row.map((cell, i) => <td key={i}>{cell}</td>)}</tr>)}
                        </tbody>
                      </Table>
                    </Viewport>
                    <Track $v><Thumb $v $size="73px" /></Track>
                  </ListMain>
                  <Track $corner><Thumb $size="46%" /></Track>
                </ListBox>
              </Section>

              <Section>
                <Caption>Items<Count>0 of 0 shown (0 selected)</Count></Caption>
                <Search id="find-items" label="Search items" />
                <ListBox>
                  <Viewport>
                    <Table $w="340px">
                      <colgroup><col width="75" /><col width="75" /><col width="75" /><col width="75" /><col /></colgroup>
                      <thead><tr><th>Type<Sort /></th><th>Name</th><th>Signal</th><th>Layer</th><th>Size</th></tr></thead>
                    </Table>
                  </Viewport>
                  <Track><Thumb $size="55%" /></Track>
                </ListBox>
              </Section>
            </Sections>
          </Dock>

          <Editor>
            <CommandRow>
              <Coordinates>0.5 mm (-19.1 55.4)</Coordinates>
              <CommandField>
                <Caret />
                <Input aria-label="Command line" />
              </CommandField>
            </CommandRow>
            <BoardArea><Board /></BoardArea>
            <Track><Thumb $size="62%" $end /></Track>
          </Editor>
        </Workspace>

        <StatusBar>Ratsnest: Nothing to do! Left-click &amp; drag to define group (or left-click to start defining a group polygon)</StatusBar>
      </Shell>
    </>
  );
}
